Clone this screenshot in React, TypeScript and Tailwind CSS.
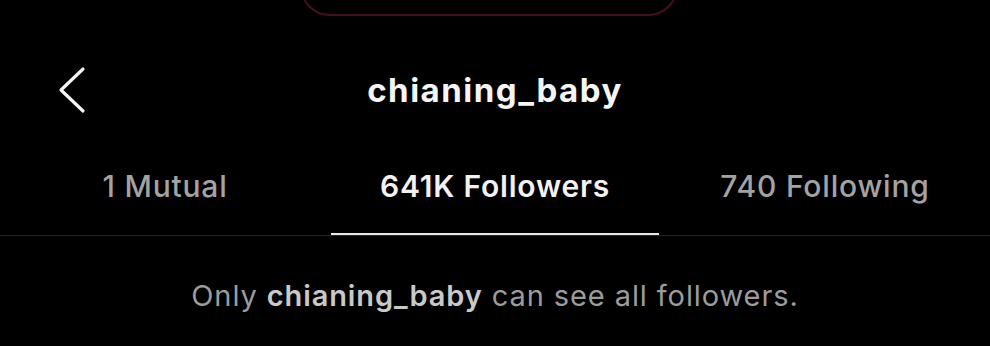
import { FunctionComponent } from 'react';

type Tab = {
    label: string;
    active?: boolean;
};

const tabs: Tab[] = [
    { label: '1 Mutual' },
    { label: '641K Followers', active: true },
    { label: '740 Following' },
];

const BackIcon: FunctionComponent = () => (
    <svg width="30" height="48" viewBox="0 0 30 48" fill="none">
        <path
            d="M27 3 L5 24 L27 45"
            stroke="#f5f5f5"
            strokeWidth="3.2"
            strokeLinecap="round"
            strokeLinejoin="round"
        />
    </svg>
);

const App: FunctionComponent = () => {
    return (
        <div
            className="h-[346px] w-[990px] overflow-hidden bg-black"
            style={{ fontFamily: 'Inter, "Noto Sans", sans-serif' }}
        >
            {/* cropped button from the screen above */}
            <div className="flex h-[16px] items-end justify-center overflow-hidden">
                <div className="mr-[12px] h-[60px] w-[378px] shrink-0 rounded-[40px] border-2 border-[#44101c]" />
            </div>

            <div className="mt-[50px] grid h-[40px] grid-cols-[1fr_auto_1fr] items-center">
                <div className="flex items-center pl-[56px]">
                    <BackIcon />
                </div>
                <h1 className="text-[33px] font-bold leading-[40px] tracking-[1.5px] text-[#f5f5f5]">
                    chianing_baby
                </h1>
                <div />
            </div>

            <div className="mt-[62px] flex border-b border-[#232323]">
                {tabs.map((tab) => (
                    <div
                        key={tab.label}
                        className="flex flex-1 flex-col items-center"
                    >
                        <span
                            className={
                                tab.active
                                    ? 'text-[30px] font-semibold leading-[36px] tracking-[0.8px] text-[#f2f2f2]'
                                    : 'text-[30px] font-medium leading-[36px] tracking-[0.8px] text-[#a3a3a3]'
                            }
                        >
                            {tab.label}
                        </span>
                        <div
                            className={
                                tab.active
                                    ? 'mt-[29px] h-[2px] w-[328px] bg-[#e8e8e8]'
                                    : 'mt-[29px] h-[2px] w-[328px]'
                            }
                        />
                    </div>
                ))}
            </div>

            <p className="mt-[43px] text-center text-[29px] leading-[34px] tracking-[0.9px] text-[#9c9c9c]">
                Only{' '}
                <span className="font-semibold text-[#c9c9c9]">
                    chianing_baby
                </span>{' '}
                can see all followers.
            </p>
        </div>
    );
};

export default App;
